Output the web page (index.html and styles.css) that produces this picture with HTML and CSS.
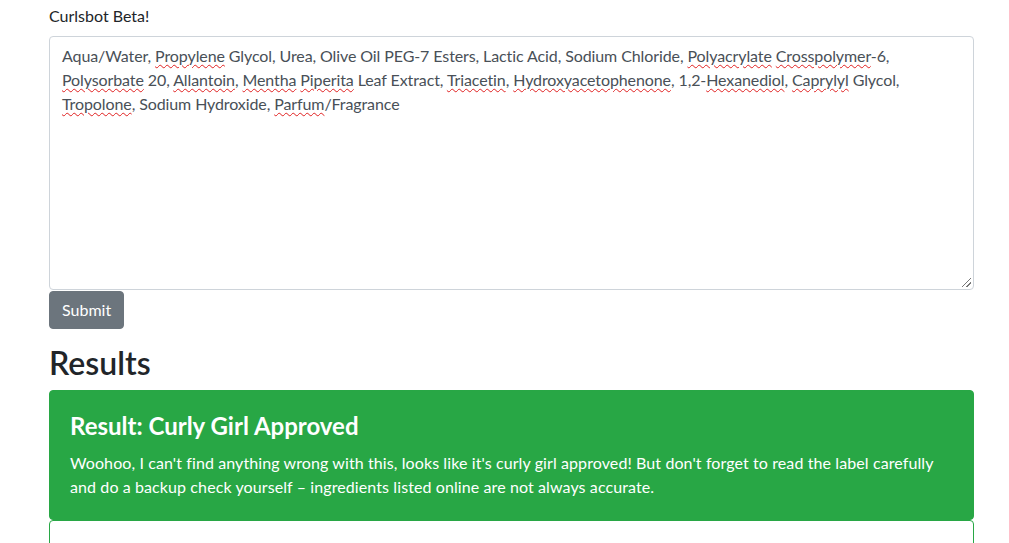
FILE: index.html
```html
<!DOCTYPE html>
<html lang="en">
<head>
<meta charset="utf-8">
<title>Curlsbot Beta!</title>
<link rel="stylesheet" href="styles.css">
</head>
<body>
<main class="page">
  <p class="intro">Curlsbot Beta!</p>
  <form class="checker">
    <div class="ingredients" role="textbox" aria-multiline="true">Aqua/Water, <span class="typo">Propylene</span> Glycol, Urea, Olive Oil PEG-7 Esters, Lactic Acid, Sodium Chloride, <span class="typo">Polyacrylate</span> <span class="typo">Crosspolymer</span>-6,<br><span class="typo">Polysorbate</span> 20, <span class="typo">Allantoin</span>, <span class="typo">Mentha</span> <span class="typo">Piperita</span> Leaf Extract, <span class="typo">Triacetin</span>, <span class="typo">Hydroxyacetophenone</span>, 1,2-<span class="typo">Hexanediol</span>, <span class="typo">Caprylyl</span> Glycol,<br><span class="typo">Tropolone</span>, Sodium Hydroxide, <span class="typo">Parfum</span>/Fragrance</div>
    <button type="button" class="btn">Submit</button>
  </form>
  <h2 class="results-title">Results</h2>
  <section class="card card-success">
    <h4 class="card-title">Result: Curly Girl Approved</h4>
    <p class="card-text">Woohoo, I can't find anything wrong with this, looks like it's curly girl approved! But don't forget to read the label carefully<br>and do a backup check yourself – ingredients listed online are not always accurate.</p>
  </section>
  <section class="card card-outline"></section>
</main>
</body>
</html>
```
FILE: styles.css
```css
* { box-sizing: border-box; }
html, body { margin: 0; height: 100%; overflow: hidden; }
body {
  font-family: Lato, "Open Sans", sans-serif;
  font-size: 16px;
  line-height: 1.5;
  color: #212529;
  background: #fff;
}
.page {
  width: 925px;
  margin-left: 49px;
  padding-top: 4px;
}
.intro {
  margin: 0 0 8px;
  font-size: 16px;
}
.checker { display: flex; flex-direction: column; align-items: flex-start; }
.ingredients {
  position: relative;
  width: 100%;
  height: 254px;
  padding: 7px 12px;
  border: 1px solid #ced4da;
  border-radius: 4px;
  color: #495057;
  white-space: nowrap;
  letter-spacing: -0.1px;
}
.ingredients::after {
  content: "";
  position: absolute;
  right: 2px;
  bottom: 2px;
  width: 9px;
  height: 9px;
  background: linear-gradient(135deg, transparent 45%, #777 45%, #777 55%, transparent 55%, transparent 70%, #777 70%, #777 80%, transparent 80%);
}
.typo {
  text-decoration: underline wavy #e02020;
  text-decoration-thickness: 1px;
  text-underline-offset: 2px;
}
.btn {
  margin-top: 1px;
  font: inherit;
  color: #fff;
  background: #6c757d;
  border: 1px solid #6c757d;
  border-radius: 4px;
  padding: 6px 12px;
  line-height: 1.5;
}
.results-title {
  margin: 15px 0 8px;
  font-size: 32px;
  font-weight: 600;
  line-height: 1.2;
}
.card {
  border-radius: 4px;
  border: 1px solid #28a745;
}
.card-success {
  background: #28a745;
  color: #fff;
  padding: 21px 20px 20px;
}
.card-title {
  margin: 0 0 10px;
  font-size: 24px;
  font-weight: 700;
  line-height: 1.2;
}
.card-text { margin: 0; white-space: nowrap; letter-spacing: 0.1px; }
.card-outline {
  height: 60px;
  background: #fff;
  border-radius: 4px 4px 0 0;
}
```
